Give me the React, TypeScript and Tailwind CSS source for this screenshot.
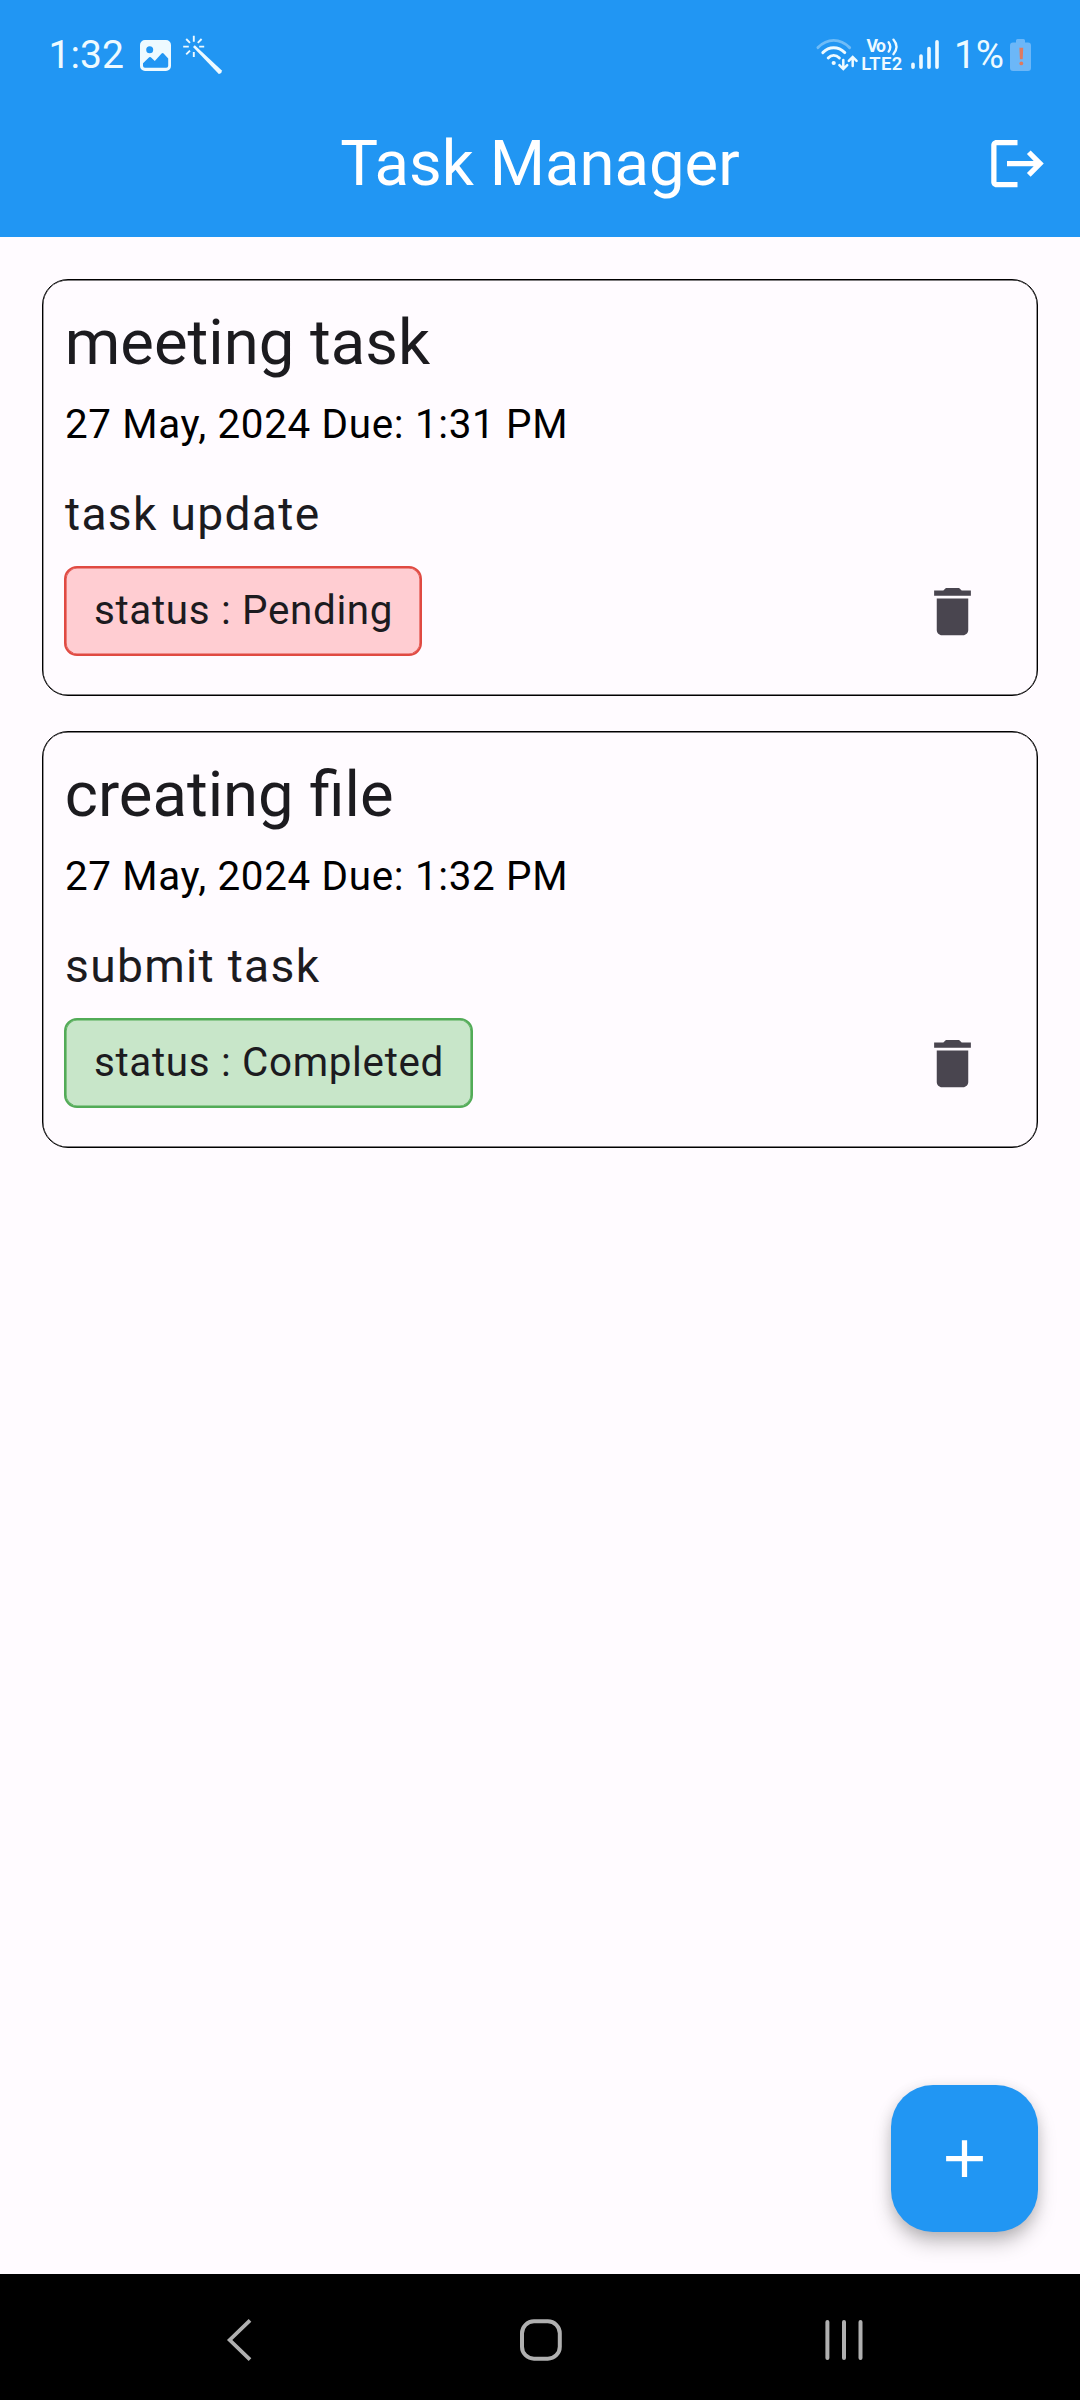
type Status = "Pending" | "Completed";

interface Task {
  title: string;
  due: string;
  description: string;
  status: Status;
}

const tasks: Task[] = [
  { title: "meeting task", due: "27 May, 2024 Due: 1:31 PM", description: "task update", status: "Pending" },
  { title: "creating file", due: "27 May, 2024 Due: 1:32 PM", description: "submit task", status: "Completed" },
];

const chipStyles: Record<Status, string> = {
  Pending: "bg-[#ffcdd2] border-[#e04a42] shadow-[inset_0_0_0_0.6px_#e04a42]",
  Completed: "bg-[#c8e6c9] border-[#52ab57] shadow-[inset_0_0_0_0.6px_#52ab57]",
};

function StatusBar() {
  return (
    <div className="flex h-[90px] items-start overflow-hidden text-[#eefaff]">
      <span className="ml-[48.5px] w-[91.5px] text-[39.1px] leading-[110px]">1:32</span>
      <svg className="h-[90px] w-[32px]" viewBox="140 0 32 90" fill="currentColor">
        <path
          fillRule="evenodd"
          d="M145 40h21a5 5 0 0 1 5 5v21a5 5 0 0 1-5 5h-21a5 5 0 0 1-5-5V45a5 5 0 0 1 5-5zM149.7 46.2a3.5 3.5 0 1 0 0 7a3.5 3.5 0 0 0 0-7zM143 63.3L149.2 57.3Q150 56.6 150.8 57.3L154.8 61L161.6 53.4Q162.6 52.5 163.6 53.4L168.2 58.4V65.7Q168.2 67.7 166.2 67.7H145Q143 67.7 143 65.7z"
        />
      </svg>
      <svg className="ml-[10px] h-[90px] w-[42px]" viewBox="182 0 42 90" fill="none" stroke="currentColor" strokeWidth="1.9">
        <path d="M193.8 35.8v6M193.8 52v5M183.2 46.6h5.6M199.2 46.6h5M186.2 39l3.8 3.8M201.6 39l-3.8 3.8M186.2 54.4l3.8-3.8" />
        <path d="M193 47L194.800 45.200L221.600 70.200Q222.400 73.400 218.800 74z" fill="currentColor" stroke="none" />
      </svg>
      <svg className="ml-auto h-[90px] w-[46px]" viewBox="816 0 46 90" fill="none" stroke="currentColor" strokeWidth="2.9" strokeLinecap="round">
        <path d="M818 47.6Q825 40.4 833.7 40.4T849.6 47.6" opacity=".38" />
        <path d="M822.8 52.6Q827.6 47.8 833.7 47.8T844.8 52.6" />
        <path d="M828.2 58Q830.6 55.4 833.7 55.4T839.4 58" />
        <circle cx="833.7" cy="63" r="2.1" fill="currentColor" stroke="none" />
        <path strokeWidth="2.5" d="M843.3 60v8.6M839.4 65.2l3.900 3.900l3.900-3.900M852.700 66V57.400M848.800 60.800l3.900-3.900l3.900 3.900" />
      </svg>
      <svg className="h-[90px] w-[42px]" viewBox="862 0 42 90" fill="currentColor">
        <text x="866.6" y="52.3" fontSize="17.6" fontWeight="700" textLength="19.4" fontFamily="Roboto, sans-serif">Vo</text>
        <text x="861.2" y="70" fontSize="18.4" fontWeight="600" textLength="41" fontFamily="Roboto, sans-serif">LTE2</text>
        <path d="M888.600 42.200Q892 46.800 888.600 51.600M893.400 39.600Q899.600 46.800 893.400 54.200" fill="none" stroke="currentColor" strokeWidth="2.300" strokeLinecap="round" />
      </svg>
      <svg className="ml-[6px] h-[90px] w-[30px]" viewBox="910 0 30 90" fill="none" stroke="currentColor" strokeWidth="3.6" strokeLinecap="round">
        <path d="M913 64.3v3M921 56v11.3M929 48.6v18.7M937 41.8v25.5" />
      </svg>
      <span className="ml-[14px] w-[56px] text-[38.6px] leading-[110px]">1%</span>
      <svg className="mr-[48px] h-[90px] w-[22px]" viewBox="1010 0 22 90">
        <path d="M1016 42.6V40.5a1.5 1.5 0 0 1 1.5-1.5h6a1.5 1.5 0 0 1 1.5 1.5v2.1h3a3 3 0 0 1 3 3V68a3 3 0 0 1-3 3h-15a3 3 0 0 1-3-3V45.6a3 3 0 0 1 3-3z" fill="#6cb7f8" />
        <path d="M1019.400 47.800h3.800l-.5 11.400h-2.800z" fill="#e07a5f" />
        <circle cx="1021.3" cy="63.4" r="1.9" fill="#e07a5f" />
      </svg>
    </div>
  );
}

function AppBar() {
  return (
    <div className="grid h-[147px] grid-cols-[1fr_auto_1fr] items-center text-white">
      <span />
      <h1 className="text-[63.4px] leading-[147px]">Task Manager</h1>
      <button className="mr-[31.5px] justify-self-end" aria-label="Log out">
        <svg className="block size-[63px]" viewBox="0 0 24 24" fill="currentColor">
          <path d="M17 7l-1.41 1.41L18.17 11H8v2h10.17l-2.58 2.58L17 17l5-5zM4 5h8V3H4c-1.1 0-2 .9-2 2v14c0 1.1.9 2 2 2h8v-2H4V5z" />
        </svg>
      </button>
    </div>
  );
}

function TaskCard({ task }: { task: Task }) {
  return (
    <article className="h-[417px] rounded-[26px] border border-black pt-[25px] pl-[21.4px] text-[#1c1b1f] shadow-[inset_0_0_0_0.4px_#000]">
      <h2 className="pl-[0.4px] text-[63.4px] leading-[74px]">{task.title}</h2>
      <p className="mt-[23px] pl-[0.5px] text-[40.4px] leading-[46px] tracking-[0.66px] text-black">{task.due}</p>
      <p className="mt-[39px] pl-[0.6px] text-[46.2px] leading-[54px] tracking-[1.31px]">{task.description}</p>
      <div className="mt-[25px] flex items-center justify-between pr-[53px]">
        <span className={`flex h-[90px] items-center rounded-[13px] border-2 pr-[26.5px] pb-px pl-[27.5px] text-[40.4px] leading-[46px] tracking-[0.66px] ${chipStyles[task.status]}`}>
          status : {task.status}
        </span>
        <button aria-label="Delete task" className="text-[#49454f]">
          <svg className="block size-[63px]" viewBox="0 0 24 24" fill="currentColor">
            <path d="M6 19c0 1.1.9 2 2 2h8c1.1 0 2-.9 2-2V7H6v12zM19 4h-3.5l-1-1h-5l-1 1H5v2h14V4z" />
          </svg>
        </button>
      </div>
    </article>
  );
}

function NavigationBar() {
  return (
    <nav className="flex h-[126px] bg-black text-[#b0b0b0]">
      <svg className="ml-[220px] h-[126px] w-[40px]" viewBox="220 2274 40 126" fill="none" stroke="currentColor" strokeWidth="3.8">
        <path d="M250 2320.3L229.7 2340L250 2359.7" />
      </svg>
      <svg className="ml-[255px] h-[126px] w-[52px]" viewBox="515 2274 52 126" fill="none" stroke="currentColor" strokeWidth="4">
        <rect x="522" y="2321.3" width="37.8" height="37.4" rx="12" />
      </svg>
      <svg className="ml-[253px] h-[126px] w-[50px]" viewBox="820 2274 50 126" fill="none" stroke="currentColor" strokeWidth="4" strokeLinecap="round">
        <path d="M827.4 2322v36M844 2322v36M860.5 2322v36" />
      </svg>
    </nav>
  );
}

export default function App() {
  return (
    <div className="flex h-[2400px] w-[1080px] flex-col bg-[#fffbff] font-[Roboto,sans-serif]">
      <header className="bg-[#2196f3]">
        <StatusBar />
        <AppBar />
      </header>
      <main className="flex flex-1 flex-col gap-[35px] px-[42px] pt-[42px] pb-[42px]">
        {tasks.map((task) => (
          <TaskCard key={task.title} task={task} />
        ))}
        <button
          aria-label="Add task"
          className="mt-auto flex size-[147px] items-center justify-center self-end rounded-[42px] bg-[#2196f3] text-white shadow-[0_12px_20px_-2px_rgba(0,0,0,0.25),0_2px_14px_rgba(0,0,0,0.1)]"
        >
          <svg className="block size-[63px]" viewBox="0 0 24 24" fill="currentColor">
            <path d="M19 13h-6v6h-2v-6H5v-2h6V5h2v6h6v2z" />
          </svg>
        </button>
      </main>
      <NavigationBar />
    </div>
  );
}
